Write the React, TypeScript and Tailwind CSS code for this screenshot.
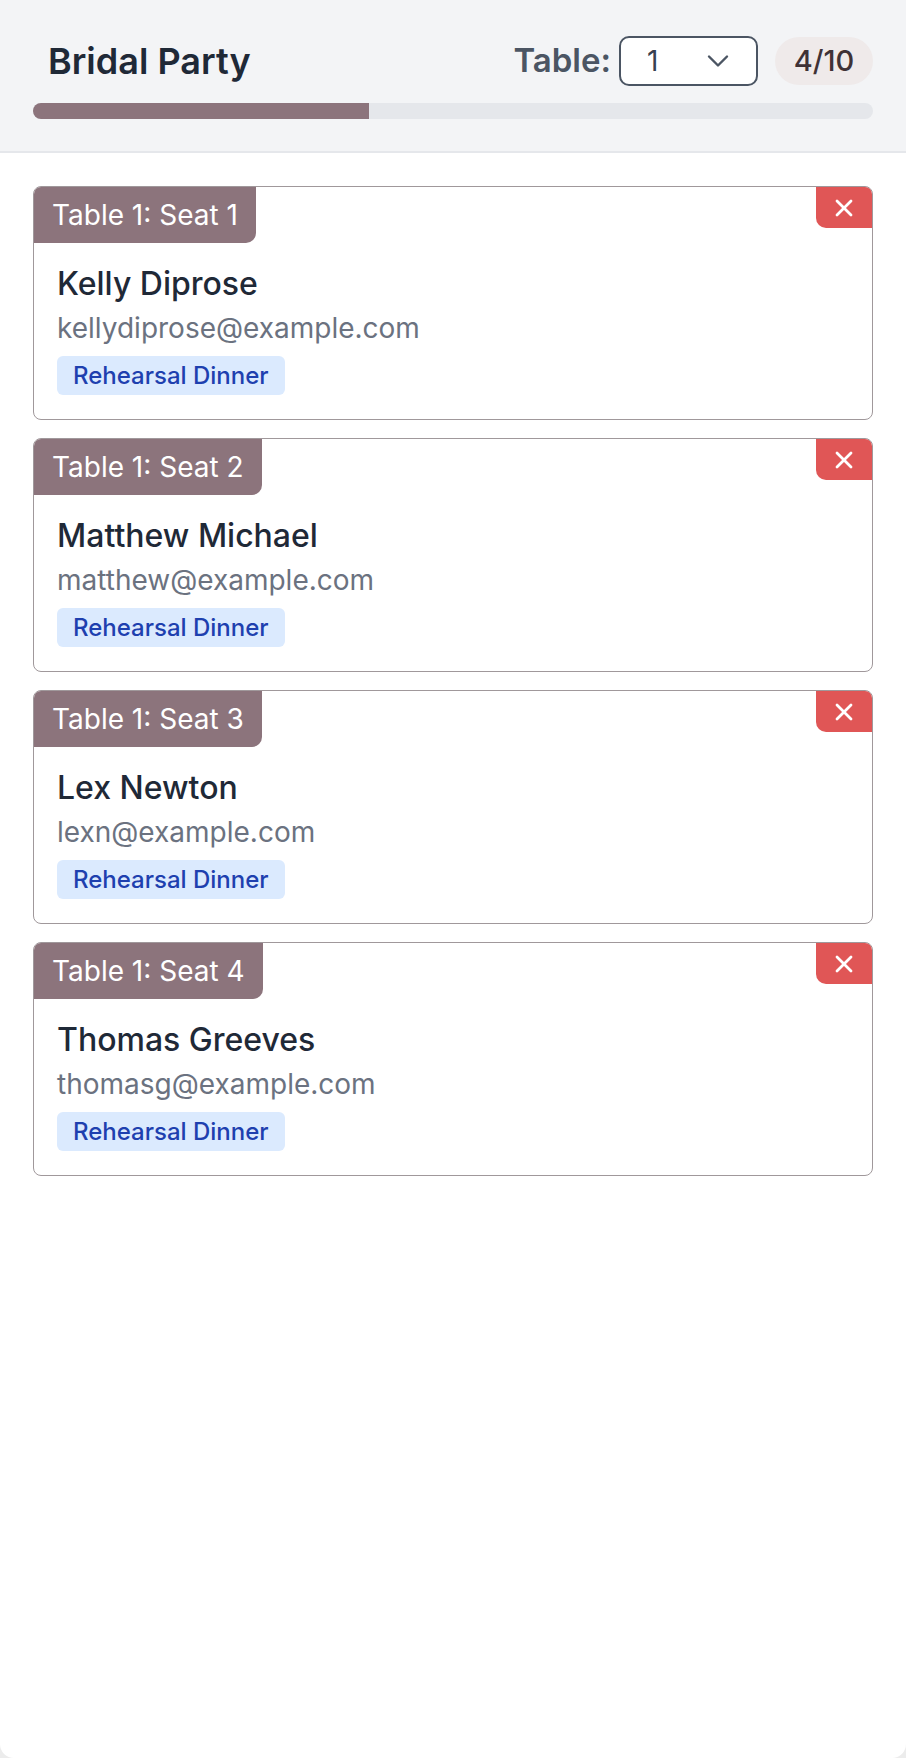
import { X, ChevronDown } from "lucide-react";

type Guest = {
  seat: number;
  name: string;
  email: string;
  event: string;
};

const guests: Guest[] = [
  { seat: 1, name: "Kelly Diprose", email: "kellydiprose@example.com", event: "Rehearsal Dinner" },
  { seat: 2, name: "Matthew Michael", email: "matthew@example.com", event: "Rehearsal Dinner" },
  { seat: 3, name: "Lex Newton", email: "lexn@example.com", event: "Rehearsal Dinner" },
  { seat: 4, name: "Thomas Greeves", email: "thomasg@example.com", event: "Rehearsal Dinner" },
];

const CAPACITY = 10;

function GuestCard({ guest }: { guest: Guest }) {
  return (
    <div className="relative overflow-hidden rounded-lg border-[1.5px] border-[#a0989b] bg-white">
      <div className="inline-flex h-[56px] items-center rounded-br-[10px] bg-[#8c747c] px-[18px] text-[28px] text-white">
        Table 1: Seat {guest.seat}
      </div>
      <button className="absolute right-0 top-0 flex h-[41px] w-[56px] items-center justify-center rounded-bl-[10px] bg-[#e05656] text-white">
        <X size={28} strokeWidth={2.4} />
      </button>
      <div className="flex flex-col items-start px-[23px] pb-[24px] pt-[23px]">
        <p className="text-[32px] font-medium leading-[36px] text-[#1f2937]">{guest.name}</p>
        <p className="mt-[10px] text-[28px] leading-[32px] text-[#6b7280]">{guest.email}</p>
        <span className="mt-[12px] flex h-[39px] items-center rounded-md bg-[#dbeafe] px-[16px] text-[24px] font-medium text-[#1e40af]">
          {guest.event}
        </span>
      </div>
    </div>
  );
}

export default function App() {
  const filled = guests.length;
  return (
    <div className="min-h-screen bg-[#ececec] font-['Inter',sans-serif]">
      <div className="min-h-[1758px] rounded-b-[14px] bg-white">
        <header className="border-b-2 border-[#e5e7eb] bg-[#f3f4f6] px-[33px] pb-[32px] pt-[36px]">
          <div className="flex items-center justify-between">
            <h1 className="pl-[15px] text-[36px] font-semibold leading-[44px] text-[#1f2937]">Bridal Party</h1>
            <div className="flex items-center">
              <span className="text-[33px] font-semibold text-[#4b5563]">Table:</span>
              <div className="ml-[8px] flex h-[50px] w-[139px] items-center justify-between rounded-[10px] border-2 border-[#4b5563] bg-white pl-[26px] pr-[20px] text-[28px] text-[#374151]">
                <span>1</span>
                <ChevronDown size={36} strokeWidth={1.6} className="text-[#4b5563]" />
              </div>
              <span className="ml-[17px] flex h-[48px] w-[98px] items-center justify-center rounded-full bg-[#efeaea] text-[29px] font-medium text-[#3f3236]">
                {filled}/{CAPACITY}
              </span>
            </div>
          </div>
          <div className="mt-[17px] h-[16px] w-full overflow-hidden rounded-full bg-[#e5e7eb]">
            <div className="h-full bg-[#8c747c]" style={{ width: `${(filled / CAPACITY) * 100}%` }} />
          </div>
        </header>
        <main className="flex flex-col gap-[18px] px-[33px] pt-[33px]">
          {guests.map((g) => (
            <GuestCard key={g.seat} guest={g} />
          ))}
        </main>
      </div>
    </div>
  );
}
